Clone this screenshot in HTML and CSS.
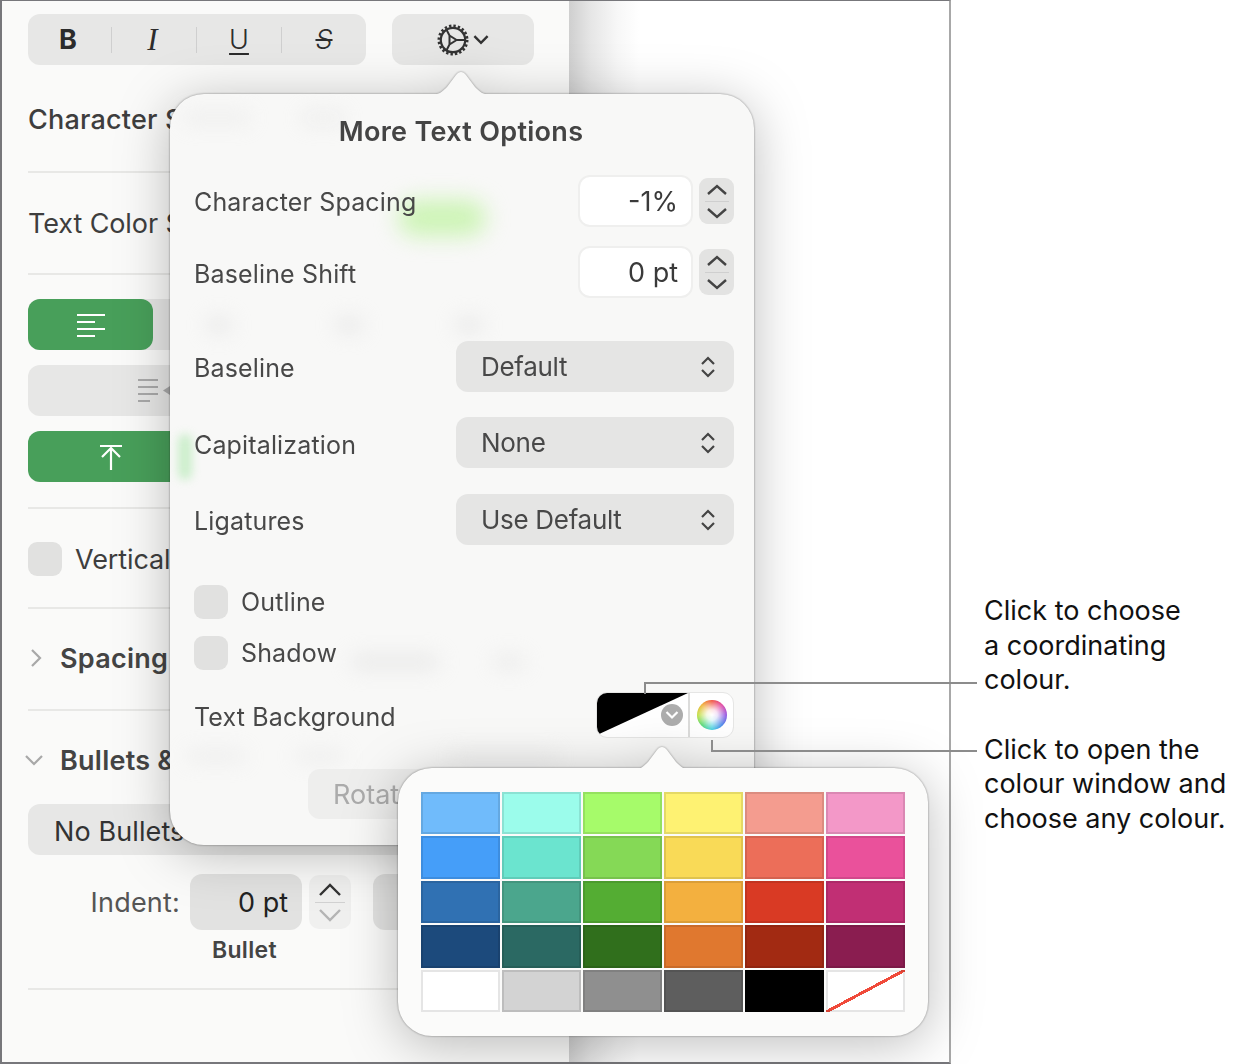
FILE: index.html
```html
<!DOCTYPE html>
<html lang="en">
<head>
<meta charset="utf-8">
<title>More Text Options</title>
<link rel="stylesheet" href="styles.css">
</head>
<body>
<div class="stage">
  <div class="window">
    <aside class="sidebar">
      <div class="toolbar">
        <div class="styles">
          <span class="style-btn bold">B</span><i class="sep"></i>
          <span class="style-btn ital">I</span><i class="sep"></i>
          <span class="style-btn under">U</span><i class="sep"></i>
          <span class="style-btn strike">S</span>
        </div>
        <div class="gear-btn">
          <svg class="gear" viewBox="0 0 32 32" width="32" height="32"><circle cx="16" cy="16" r="12.2" fill="none" stroke="#333" stroke-width="2.2"/><circle cx="16" cy="16" r="14.2" fill="none" stroke="#333" stroke-width="2.6" stroke-dasharray="2.4 2.06"/><path d="M12.5 11.500 19.500 16 12.5 20.500Z M19.500 16H28 M12.500 11.500 9 4.800 M12.500 20.500 9 27.200" fill="none" stroke="#333" stroke-width="2"/></svg>
          <svg class="chev" viewBox="0 0 16 10" width="18" height="11"><path d="M2 2l6 6 6-6" fill="none" stroke="#333" stroke-width="2.200"/></svg>
        </div>
      </div>
      <section class="sec sec-char"><span class="side-label">Character Styles</span></section>
      <section class="sec sec-color"><span class="side-label">Text Color Styles</span></section>
      <section class="sec sec-align">
        <div class="align-row">
          <div class="seg seg-on">
            <svg viewBox="0 0 30 26" width="30" height="26"><path d="M1 3h28M1 10h18M1 17h28M1 24h18" stroke="#fff" stroke-width="2.200"/></svg>
          </div>
        </div>
        <div class="align-row indent-row">
          <svg viewBox="0 0 34 26" width="34" height="26"><path d="M1 2h20M1 9h20M1 16h20M1 23h12" stroke="#a9a9a9" stroke-width="2.200"/><path d="M33 8v9l-7-4.500z" fill="#a9a9a9"/></svg>
        </div>
        <div class="align-row valign-row">
          <svg viewBox="0 0 24 26" width="24" height="26"><path d="M1 2h22M12 26V4M3 13l9-9 9 9" fill="none" stroke="#fff" stroke-width="2.200"/></svg>
        </div>
      </section>
      <section class="sec sec-vert"><span class="box"></span><span class="side-label">Vertical Text</span></section>
      <section class="sec sec-spacing">
        <svg class="disc" viewBox="0 0 12 20" width="12" height="20"><path d="M2 2l8 8-8 8" fill="none" stroke="#a8a8a8" stroke-width="2.200"/></svg>
        <span class="side-head">Spacing</span>
      </section>
      <section class="sec sec-bullets">
        <div class="bullets-head">
          <svg class="disc-open" viewBox="0 0 20 12" width="20" height="12"><path d="M2 2l8 8 8-8" fill="none" stroke="#a8a8a8" stroke-width="2.200"/></svg>
          <span class="side-head">Bullets &amp; Lists</span>
        </div>
        <div class="no-bullets">No Bullets</div>
        <div class="indent">
          <span class="indent-label">Indent:</span>
          <span class="indent-field">0 pt</span>
          <span class="indent-step">
            <svg viewBox="0 0 24 14" width="24" height="14"><path d="M2 12l10-10 10 10" fill="none" stroke="#333" stroke-width="2.400"/></svg>
            <i class="step-line"></i>
            <svg viewBox="0 0 24 14" width="24" height="14"><path d="M2 2l10 10 10-10" fill="none" stroke="#b4b4b4" stroke-width="2.400"/></svg>
          </span>
          <span class="indent-field indent-next"></span>
        </div>
        <div class="bullet-cap">Bullet</div>
      </section>
    </aside>
    <main class="canvas"></main>
  </div>

  <div class="callouts">
    <p class="note">Click to choose<br>a coordinating<br>colour.</p>
    <p class="note">Click to open the<br>colour window and<br>choose any colour.</p>
  </div>

  <div class="pop pop-main">
    <svg class="beak" viewBox="0 0 64 26" width="64" height="26"><path d="M0 26C10 26 13 23 18 18L27 6C30 2 34 2 37 6L46 18C51 23 54 26 64 26Z" fill="#f8f8f7"/></svg>
    <span class="ghost g-green"></span>
    <span class="ghost g-green2"></span>
    <span class="ghost g1"></span><span class="ghost g2"></span><span class="ghost g3"></span>
    <span class="ghost g4"></span><span class="ghost g5"></span><span class="ghost g6"></span>
    <span class="ghost g7"></span><span class="ghost g8"></span><span class="ghost g9"></span><span class="ghost g10"></span>
    <h2 class="pop-title">More Text Options</h2>
    <div class="row row-a">
      <span class="lbl">Character Spacing</span>
      <div class="spin"><span class="field">-1%</span>
        <span class="stepper"><svg viewBox="0 0 24 14" width="24" height="14"><path d="M3 11l9-8 9 8" fill="none" stroke="#444" stroke-width="2.400"/></svg><i class="step-line"></i><svg viewBox="0 0 24 14" width="24" height="14"><path d="M3 3l9 8 9-8" fill="none" stroke="#444" stroke-width="2.400"/></svg></span>
      </div>
    </div>
    <div class="row row-b">
      <span class="lbl">Baseline Shift</span>
      <div class="spin"><span class="field">0 pt</span>
        <span class="stepper"><svg viewBox="0 0 24 14" width="24" height="14"><path d="M3 11l9-8 9 8" fill="none" stroke="#444" stroke-width="2.400"/></svg><i class="step-line"></i><svg viewBox="0 0 24 14" width="24" height="14"><path d="M3 3l9 8 9-8" fill="none" stroke="#444" stroke-width="2.400"/></svg></span>
      </div>
    </div>
    <div class="row row-c">
      <span class="lbl">Baseline</span>
      <div class="select"><span>Default</span><svg viewBox="0 0 16 24" width="16" height="24"><path d="M2 9l6-6 6 6M2 15l6 6 6-6" fill="none" stroke="#444" stroke-width="2.200"/></svg></div>
    </div>
    <div class="row row-d">
      <span class="lbl">Capitalization</span>
      <div class="select"><span>None</span><svg viewBox="0 0 16 24" width="16" height="24"><path d="M2 9l6-6 6 6M2 15l6 6 6-6" fill="none" stroke="#444" stroke-width="2.200"/></svg></div>
    </div>
    <div class="row row-e">
      <span class="lbl">Ligatures</span>
      <div class="select"><span>Use Default</span><svg viewBox="0 0 16 24" width="16" height="24"><path d="M2 9l6-6 6 6M2 15l6 6 6-6" fill="none" stroke="#444" stroke-width="2.200"/></svg></div>
    </div>
    <div class="check check-a"><span class="box"></span><span class="lbl">Outline</span></div>
    <div class="check check-b"><span class="box"></span><span class="lbl">Shadow</span></div>
    <div class="row row-f">
      <span class="lbl">Text Background</span>
      <div class="well">
        <div class="well-swatch"><svg class="well-tri" viewBox="0 0 91 44" width="91" height="44" preserveAspectRatio="none"><path d="M0 0H91L0 42Z" fill="#000"/></svg>
          <span class="well-more"><svg viewBox="0 0 14 10" width="14" height="10"><path d="M1.500 2l5.500 5.500L12.500 2" fill="none" stroke="#fff" stroke-width="2.200"/></svg></span>
        </div>
        <div class="well-wheel"><span class="wheel"></span></div>
      </div>
    </div>
    <div class="rotate">Rotate</div>
  </div>

  <div class="pop pop-colors">
    <svg class="beak beak-b" viewBox="0 0 64 26" width="64" height="26"><path d="M0 26C10 26 13 23 18 18L27 6C30 2 34 2 37 6L46 18C51 23 54 26 64 26Z" fill="#fbfbfa"/></svg>
    <div class="palette">
      <span class="sw a1"></span><span class="sw a2"></span><span class="sw a3"></span><span class="sw a4"></span><span class="sw a5"></span><span class="sw a6"></span>
      <span class="sw b1"></span><span class="sw b2"></span><span class="sw b3"></span><span class="sw b4"></span><span class="sw b5"></span><span class="sw b6"></span>
      <span class="sw c1"></span><span class="sw c2"></span><span class="sw c3"></span><span class="sw c4"></span><span class="sw c5"></span><span class="sw c6"></span>
      <span class="sw d1"></span><span class="sw d2"></span><span class="sw d3"></span><span class="sw d4"></span><span class="sw d5"></span><span class="sw d6"></span>
      <span class="sw e1"></span><span class="sw e2"></span><span class="sw e3"></span><span class="sw e4"></span><span class="sw e5"></span><span class="sw e6"></span>
    </div>
  </div>

  <div class="leader leader-a"></div>
  <div class="leader leader-b"></div>
</div>
</body>
</html>
```

FILE: styles.css
```css
* { box-sizing: border-box; }
html, body { margin: 0; padding: 0; background: #fff; }
body { font-family: Inter, "Noto Sans", sans-serif; color: #3c3c3c; }
.stage { position: relative; width: 1234px; height: 1064px; display: flex; overflow: hidden; }

/* window */
.window { width: 951px; height: 1064px; border: 1px solid #77777b; border-width: 1px 2px 2px 2px; border-right-color: #a8a8a8; display: flex; flex: none; }
.sidebar { width: 567px; flex: none; background: #fafaf9; padding: 13px 28px 0 26px; display: flex; flex-direction: column; }
.canvas { flex: 1; background: linear-gradient(90deg, #cfcfcf 0, #e6e6e6 22px, #f7f7f7 48px, #fff 70px); }

.toolbar { display: flex; gap: 26px; height: 51px; flex: none; }
.styles { width: 338px; height: 51px; border-radius: 12px; background: #e7e7e6; display: grid; grid-template-columns: 83px 1px 84px 1px 84px 1px 1fr; align-items: center; justify-items: center; }
.style-btn { font-size: 27px; line-height: 1; color: #2c2c2c; }
.bold { font-weight: 700; margin-right: 3px; }
.ital { font-family: "Liberation Serif", serif; font-style: italic; font-size: 31px; margin-right: 3px; }
.under { text-decoration: underline; text-underline-offset: 4px; text-decoration-thickness: 2px; font-weight: 300; }
.strike { text-decoration: line-through; text-decoration-thickness: 2px; font-weight: 300; font-style: italic; }
.sep { width: 1px; height: 26px; background: #cfcfcf; }
.gear-btn { width: 142px; height: 51px; border-radius: 12px; background: #e7e7e6; display: flex; align-items: center; justify-content: center; gap: 3px; }

.sec { border-bottom: 2px solid #e8e8e6; flex: none; display: flex; align-items: center; }
.sec-char { height: 108px; padding-top: 2px; }
.sec-color { height: 102px; }
.sec-align { height: 234px; flex-direction: column; align-items: stretch; padding-top: 24px; gap: 15px; }
.sec-vert { height: 100px; gap: 13px; padding-top: 2px; }
.sec-spacing { height: 102px; padding-bottom: 2px; }
.sec-bullets { height: 279px; flex-direction: column; align-items: flex-start; }
.side-label { font-size: 27px; color: #3e3e3e; white-space: nowrap; letter-spacing: -.1px; }
.sec-char .side-label { font-weight: 500; letter-spacing: .2px; }
.side-head { font-size: 27px; font-weight: 600; color: #444; white-space: nowrap; letter-spacing: .25px; }
.box { display: block; flex: none; width: 34px; height: 34px; border-radius: 9px; background: #e1e1e0; }

.align-row { height: 51px; border-radius: 12px; background: #e7e7e6; display: flex; align-items: center; flex: none; }
.seg { width: 125px; height: 51px; border-radius: 12px; display: flex; align-items: center; justify-content: center; }
.seg-on { background: #489f5a; }
.indent-row { padding-left: 109px; }
.valign-row { background: #489f5a; padding-left: 71px; }

.disc { margin: 0 18px 0 2px; }
.bullets-head { height: 98px; display: flex; align-items: center; margin-left: -4px; flex: none; }
.disc-open { margin-right: 16px; }
.no-bullets { width: 100%; height: 51px; border-radius: 12px; background: #e7e7e6; font-size: 27px; display: flex; align-items: center; padding: 3px 0 0 26px; color: #333; letter-spacing: .1px; flex: none; margin-top: -5px; }
.indent { display: flex; align-items: center; margin-top: 19px; height: 56px; flex: none; }
.indent-label { width: 152px; text-align: right; font-size: 27px; color: #555; margin-right: 10px; letter-spacing: .2px; }
.indent-field { width: 112px; height: 56px; border-radius: 12px; background: #e2e2e1; font-size: 27px; color: #222; display: flex; align-items: center; justify-content: flex-end; padding-right: 14px; flex: none; }
.indent-step { width: 42px; height: 54px; margin-left: 7px; border-radius: 10px; background: #f0f0ef; display: flex; flex-direction: column; align-items: center; justify-content: center; gap: 5px; flex: none; }
.indent-next { margin-left: 22px; width: 100px; }
.step-line { display: block; width: 30px; height: 1px; background: #d2d2d2; }
.bullet-cap { width: 100%; font-size: 23px; font-weight: 600; color: #444; padding-left: 184px; margin-top: 6px; letter-spacing: .3px; }

/* notes */
.callouts { padding: 594px 0 0 33px; flex: none; }
.note { margin: 0 0 35px; font-family: Inter, "Liberation Sans", sans-serif; font-size: 27px; line-height: 34.6px; color: #111; white-space: nowrap; }

/* popovers */
.pop { position: absolute; border-radius: 34px; filter: drop-shadow(0 0 1px rgba(0,0,0,.42)) drop-shadow(0 8px 26px rgba(0,0,0,.26)); }
.pop-main { left: 170px; top: 94px; width: 584px; height: 751px; background: #f8f8f7; padding: 0 20px 0 24px; }
.beak { position: absolute; left: 259px; top: -25px; }
.beak-b { left: 232px; top: -24px; }
.pop-title { margin: 0; height: 74px; padding-right: 6px; display: flex; align-items: center; justify-content: center; font-size: 27px; font-weight: 600; color: #444; letter-spacing: .3px; position: relative; }
.row { display: flex; align-items: center; justify-content: space-between; position: relative; }
.lbl { font-size: 25px; color: #484848; white-space: nowrap; letter-spacing: .15px; }
.row .lbl { padding-top: 2px; }
.row-b .lbl, .row-d .lbl, .row-f .lbl { padding-top: 4px; }
.spin { display: flex; align-items: center; gap: 6px; }
.field { width: 115px; height: 52px; border-radius: 12px; background: #fff; border: 2px solid #efefee; font-size: 27px; color: #3a3a3a; display: flex; align-items: center; justify-content: flex-end; padding-right: 13px; }
.stepper { width: 35px; height: 46px; border-radius: 9px; background: #e3e3e2; display: flex; flex-direction: column; align-items: center; justify-content: center; gap: 4px; }
.stepper .step-line { width: 24px; background: #cfcfcf; }
.select { width: 278px; height: 51px; border-radius: 12px; background: #e5e5e4; display: flex; align-items: center; justify-content: space-between; padding: 0 18px 0 25px; font-size: 26px; color: #484848; letter-spacing: -.3px; }
.row-a { height: 52px; margin-top: 7px; }
.row-b { height: 52px; margin-top: 19px; }
.row-c { height: 51px; margin-top: 43px; }
.row-d { height: 51px; margin-top: 25px; }
.row-e { height: 51px; margin-top: 26px; }
.check { display: flex; align-items: center; gap: 13px; height: 34px; position: relative; }
.check-a { margin-top: 40px; }
.check-b { margin-top: 17px; }
.row-f { height: 46px; margin-top: 22px; }
.well { width: 138px; height: 46px; border-radius: 11px; border: 1px solid #e6e6e5; background: #fff; display: flex; overflow: hidden; }
.well-swatch { width: 93px; flex: none; position: relative; border-right: 2px solid #dcdcdb; }
.well-tri { display: block; position: absolute; left: 0; top: 0; }
.well-more { position: absolute; right: 5px; top: 11px; width: 22px; height: 22px; border-radius: 50%; background: #adadad; display: flex; align-items: center; justify-content: center; }
.well-wheel { flex: 1; display: flex; align-items: center; justify-content: center; }
.wheel { width: 30px; height: 30px; border-radius: 50%; background: radial-gradient(circle, #fff 0, rgba(255,255,255,.85) 25%, rgba(255,255,255,0) 72%), conic-gradient(#f0503c, #e040a0, #9050e0, #4080e8, #40d0e0, #50d870, #c0e040, #f0b030, #f0503c); }
.rotate { width: 160px; height: 50px; margin: 31px 0 0 114px; border-radius: 12px; background: #eeeeed; color: #ababab; font-size: 27px; display: flex; align-items: center; padding-left: 25px; position: relative; }

.ghost { position: absolute; display: block; border-radius: 20px; background: #dcdcdc; filter: blur(10px); opacity: .5; }
.g-green { left: 228px; top: 106px; width: 88px; height: 36px; background: #cdf4b6; filter: blur(11px); opacity: 1; }
.g-green2 { left: 8px; top: 340px; width: 14px; height: 46px; background: #b8eab8; filter: blur(5px); opacity: .7; }
.g1 { left: 36px; top: 222px; width: 26px; height: 18px; }
.g2 { left: 165px; top: 222px; width: 28px; height: 18px; }
.g3 { left: 285px; top: 222px; width: 28px; height: 18px; }
.g4 { left: 12px; top: 16px; width: 70px; height: 16px; opacity: .3; }
.g5 { left: 130px; top: 16px; width: 46px; height: 16px; opacity: .3; }
.g6 { left: 180px; top: 560px; width: 90px; height: 16px; }
.g7 { left: 322px; top: 560px; width: 34px; height: 16px; opacity: .4; }
.g8 { left: 16px; top: 656px; width: 60px; height: 12px; opacity: .4; }
.g9 { left: 125px; top: 656px; width: 50px; height: 12px; opacity: .4; }
.g10 { left: 280px; top: 656px; width: 110px; height: 12px; opacity: .3; }

.pop-colors { left: 398px; top: 768px; width: 530px; height: 268px; background: #fbfbfa; padding: 23.500px 23px; }
.palette { display: grid; grid-template-columns: repeat(6, 79px); grid-auto-rows: 42.5px; gap: 2px; position: relative; }
.sw { display: block; box-shadow: inset 0 0 0 2px rgba(0,0,0,.1); }
.a1 { background: #70bbfb; } .a2 { background: #9bfceb; } .a3 { background: #a6fb6a; } .a4 { background: #fef272; } .a5 { background: #f49c8f; } .a6 { background: #f398c8; }
.b1 { background: #459ef9; } .b2 { background: #6be4cf; } .b3 { background: #85d956; } .b4 { background: #f9da57; } .b5 { background: #ec6e59; } .b6 { background: #ea519b; }
.c1 { background: #3071b3; } .c2 { background: #4ba68d; } .c3 { background: #54ad33; } .c4 { background: #f3b03f; } .c5 { background: #d93a24; } .c6 { background: #c12f74; }
.d1 { background: #1c4a7c; } .d2 { background: #2b6963; } .d3 { background: #306f1c; } .d4 { background: #e0782f; } .d5 { background: #a22a12; } .d6 { background: #8a1d50; }
.e1 { background: #fff; } .e2 { background: #d3d3d3; } .e3 { background: #8f8f8f; } .e4 { background: #5e5e5e; } .e5 { background: #000; }
.e6 { background: linear-gradient(to top left, #fff calc(50% - 1.5px), #f04a3a calc(50% - 1.5px), #f04a3a calc(50% + 1.5px), #fff calc(50% + 1.5px)); }

/* leaders */
.leader { position: absolute; border: 0 solid #8c8c8c; }
.leader-a { left: 644px; top: 682px; width: 333px; height: 12px; border-width: 2px 0 0 2px; }
.leader-b { left: 711px; top: 740px; width: 266px; height: 12px; border-width: 0 0 2px 2px; }
```
